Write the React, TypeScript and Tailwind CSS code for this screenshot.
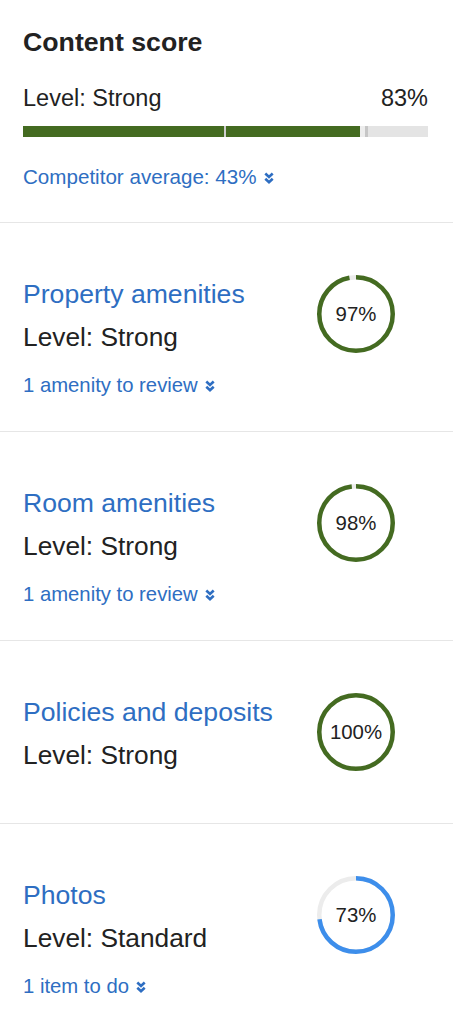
import React from "react";

const GREEN = "#446b21";
const BLUE_RING = "#3d8eeb";

function Chevrons() {
  return (
    <svg width="10" height="12" viewBox="0 0 10 12" className="ml-[7px] inline-block align-[0px]" fill="none">
      <path d="M1.3 1.5 L5 5 L8.7 1.5" stroke="#2e6ec2" strokeWidth="2.6" />
      <path d="M1.3 6.7 L5 10.2 L8.7 6.7" stroke="#2e6ec2" strokeWidth="2.6" />
    </svg>
  );
}

function Ring({ value, color }: { value: number; color: string }) {
  const r = 36.75;
  const c = 2 * Math.PI * r;
  return (
    <div className="relative h-[80px] w-[80px]">
      <svg width="80" height="80" viewBox="0 0 80 80" className="-rotate-90">
        <circle cx="40" cy="40" r={r} fill="none" stroke="#ececec" strokeWidth="4.5" />
        <circle
          cx="40"
          cy="40"
          r={r}
          fill="none"
          stroke={color}
          strokeWidth="4.5"
          strokeDasharray={`${(c * value) / 100} ${c}`}
        />
      </svg>
      <span className="absolute inset-0 flex items-center justify-center text-[20.4px] leading-none text-[#222]">
        {value}%
      </span>
    </div>
  );
}

type Section = {
  title: string;
  level: string;
  value: number;
  link?: string;
  blue?: boolean;
};

const SECTIONS: Section[] = [
  { title: "Property amenities", level: "Level: Strong", value: 97, link: "1 amenity to review" },
  { title: "Room amenities", level: "Level: Strong", value: 98, link: "1 amenity to review" },
  { title: "Policies and deposits", level: "Level: Strong", value: 100 },
  { title: "Photos", level: "Level: Standard", value: 73, link: "1 item to do", blue: true },
];

export default function App() {
  return (
    <div className="min-h-screen bg-white font-['Liberation_Sans',Arial,sans-serif] text-[#222]">
      {/* CONTENT SCORE */}
      <div className="border-b border-[#e6e6e6] pb-[33px] pl-[23px] pr-[25px] pt-[26px]">
        <h1 className="text-[26.7px] font-bold leading-[32px]">Content score</h1>
        <div className="mt-[26px] flex items-center justify-between text-[23.5px] leading-[28px]">
          <span>Level: Strong</span>
          <span>83%</span>
        </div>
        <div className="mt-[14px] flex h-[11px]">
          <div className="w-[201px]" style={{ backgroundColor: GREEN }} />
          <div className="w-[2px] bg-[#cfcfcf]" />
          <div className="w-[134px]" style={{ backgroundColor: GREEN }} />
          <div className="w-[5px] bg-[#ededed]" />
          <div className="w-[3px] bg-[#c6c6c6]" />
          <div className="flex-1 bg-[#e4e4e4]" />
        </div>
        <p className="mt-[28px] text-[20.6px] leading-[24px] text-[#2e6ec2]">
          Competitor average: 43%
          <Chevrons />
        </p>
      </div>

      {SECTIONS.map((s) => (
        <div
          key={s.title}
          className={
            "flex justify-between border-b border-[#e6e6e6] pl-[23px] pr-[57px] pt-[52px] " +
            (s.link ? "pb-[34px]" : "pb-[51px]")
          }
        >
          <div className="pt-[3px]">
            <h2 className="text-[26.6px] leading-[32px] text-[#2e6ec2]">{s.title}</h2>
            <p className="mt-[11px] text-[26.3px] leading-[32px] text-[#222]">{s.level}</p>
            {s.link && (
              <p className="mt-[20px] text-[20.3px] leading-[24px] text-[#2e6ec2]">
                {s.link}
                <Chevrons />
              </p>
            )}
          </div>
          <div className="-mt-[1px]">
            <Ring value={s.value} color={s.blue ? BLUE_RING : GREEN} />
          </div>
        </div>
      ))}
    </div>
  );
}
